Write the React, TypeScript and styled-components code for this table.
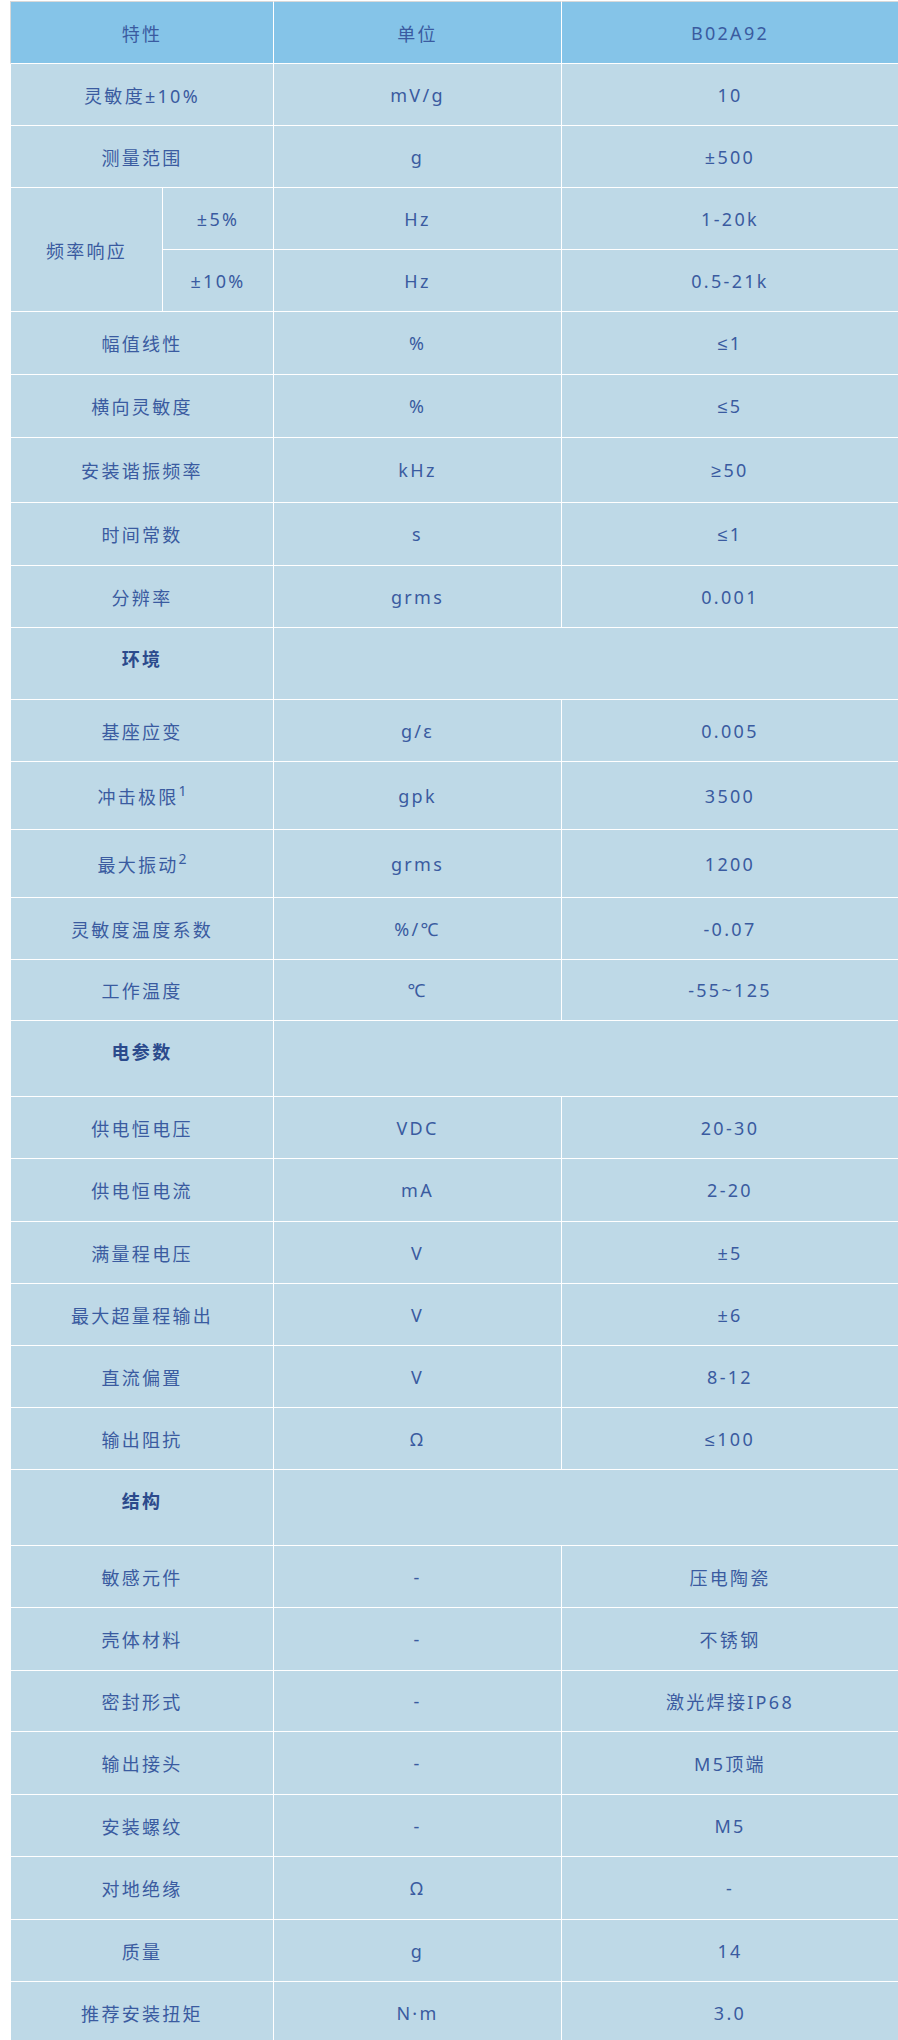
import React from 'react';
import styled, { createGlobalStyle } from 'styled-components';

const GlobalStyle = createGlobalStyle`
  html, body {
    margin: 0;
    padding: 0;
    background: #ffffff;
  }
  body {
    font-family: "Noto Sans", "Liberation Sans", "Noto Sans CJK SC", sans-serif;
  }
`;

const Page = styled.div`
  width: 898px;
  padding: 1px 0 0 10px;
  box-sizing: border-box;
  overflow: hidden;
`;

const Table = styled.table`
  width: 889px;
  table-layout: fixed;
  border-collapse: separate;
  border-spacing: 0;
  font-size: 18px;
  letter-spacing: 2.3px;
  color: #3a5ba0;
`;

const Row = styled.tr<{ $h: number }>`
  height: ${(p) => p.$h}px;
`;

const HeadCell = styled.th<{ $first?: boolean }>`
  padding: 0;
  background: #85c4e8;
  font-weight: 400;
  text-align: center;
  vertical-align: middle;
  border-top: 1px solid #d9d9d9;
  border-right: 1px solid #ffffff;
  border-bottom: 1px solid #ffffff;
  border-left: ${(p) => (p.$first ? '1px solid #d9d9d9' : 'none')};
`;

const Cell = styled.td<{ $first?: boolean }>`
  padding: 0;
  background: #bed9e7;
  text-align: center;
  vertical-align: middle;
  border-right: 1px solid #ffffff;
  border-bottom: 1px solid #ffffff;
  border-left: ${(p) => (p.$first ? '1px solid #ffffff' : 'none')};
  white-space: nowrap;
`;

const SectionCell = styled(Cell)`
  vertical-align: top;
  padding-top: 19px;
  line-height: 24px;
  font-weight: 700;
  color: #2b4a8c;
`;

const Sup = styled.sup`
  font-size: 14px;
  line-height: 0;
  vertical-align: 8px;
  letter-spacing: 0;
  margin-left: 0;
`;

type Spec = { kind: 'spec'; name: React.ReactNode; unit: string; value: string; h: number };
type Section = { kind: 'section'; title: string; h: number };
type Split = {
  kind: 'split';
  name: string;
  subs: { label: string; unit: string; value: string; h: number }[];
};
type Item = Spec | Section | Split;

const rows: Item[] = [
  { kind: 'spec', name: '灵敏度±10%', unit: 'mV/g', value: '10', h: 62 },
  { kind: 'spec', name: '测量范围', unit: 'g', value: '±500', h: 62 },
  {
    kind: 'split',
    name: '频率响应',
    subs: [
      { label: '±5%', unit: 'Hz', value: '1-20k', h: 62 },
      { label: '±10%', unit: 'Hz', value: '0.5-21k', h: 62 },
    ],
  },
  { kind: 'spec', name: '幅值线性', unit: '%', value: '≤1', h: 63 },
  { kind: 'spec', name: '横向灵敏度', unit: '%', value: '≤5', h: 63 },
  { kind: 'spec', name: '安装谐振频率', unit: 'kHz', value: '≥50', h: 65 },
  { kind: 'spec', name: '时间常数', unit: 's', value: '≤1', h: 63 },
  { kind: 'spec', name: '分辨率', unit: 'grms', value: '0.001', h: 62 },
  { kind: 'section', title: '环境', h: 72 },
  { kind: 'spec', name: '基座应变', unit: 'g/ε', value: '0.005', h: 62 },
  {
    kind: 'spec',
    name: (
      <>
        冲击极限<Sup>1</Sup>
      </>
    ),
    unit: 'gpk',
    value: '3500',
    h: 68,
  },
  {
    kind: 'spec',
    name: (
      <>
        最大振动<Sup>2</Sup>
      </>
    ),
    unit: 'grms',
    value: '1200',
    h: 68,
  },
  { kind: 'spec', name: '灵敏度温度系数', unit: '%/℃', value: '-0.07', h: 62 },
  { kind: 'spec', name: '工作温度', unit: '℃', value: '-55~125', h: 61 },
  { kind: 'section', title: '电参数', h: 76 },
  { kind: 'spec', name: '供电恒电压', unit: 'VDC', value: '20-30', h: 62 },
  { kind: 'spec', name: '供电恒电流', unit: 'mA', value: '2-20', h: 63 },
  { kind: 'spec', name: '满量程电压', unit: 'V', value: '±5', h: 62 },
  { kind: 'spec', name: '最大超量程输出', unit: 'V', value: '±6', h: 62 },
  { kind: 'spec', name: '直流偏置', unit: 'V', value: '8-12', h: 62 },
  { kind: 'spec', name: '输出阻抗', unit: 'Ω', value: '≤100', h: 62 },
  { kind: 'section', title: '结构', h: 76 },
  { kind: 'spec', name: '敏感元件', unit: '-', value: '压电陶瓷', h: 62 },
  { kind: 'spec', name: '壳体材料', unit: '-', value: '不锈钢', h: 63 },
  { kind: 'spec', name: '密封形式', unit: '-', value: '激光焊接IP68', h: 61 },
  { kind: 'spec', name: '输出接头', unit: '-', value: 'M5顶端', h: 63 },
  { kind: 'spec', name: '安装螺纹', unit: '-', value: 'M5', h: 62 },
  { kind: 'spec', name: '对地绝缘', unit: 'Ω', value: '-', h: 63 },
  { kind: 'spec', name: '质量', unit: 'g', value: '14', h: 62 },
  { kind: 'spec', name: '推荐安装扭矩', unit: 'N·m', value: '3.0', h: 62 },
];

const renderItem = (item: Item, index: number) => {
  if (item.kind === 'section') {
    return (
      <Row key={index} $h={item.h}>
        <SectionCell $first colSpan={2}>
          {item.title}
        </SectionCell>
        <Cell colSpan={2} />
      </Row>
    );
  }

  if (item.kind === 'split') {
    return item.subs.map((sub, i) => (
      <Row key={`${index}-${i}`} $h={sub.h}>
        {i === 0 && (
          <Cell $first rowSpan={item.subs.length}>
            {item.name}
          </Cell>
        )}
        <Cell>{sub.label}</Cell>
        <Cell>{sub.unit}</Cell>
        <Cell>{sub.value}</Cell>
      </Row>
    ));
  }

  return (
    <Row key={index} $h={item.h}>
      <Cell $first colSpan={2}>
        {item.name}
      </Cell>
      <Cell>{item.unit}</Cell>
      <Cell>{item.value}</Cell>
    </Row>
  );
};

export default function App() {
  return (
    <>
      <GlobalStyle />
      <Page>
        <Table>
          <colgroup>
            <col style={{ width: 153 }} />
            <col style={{ width: 111 }} />
            <col style={{ width: 288 }} />
            <col style={{ width: 337 }} />
          </colgroup>
          <thead>
            <Row $h={63}>
              <HeadCell $first colSpan={2}>
                特性
              </HeadCell>
              <HeadCell>单位</HeadCell>
              <HeadCell>B02A92</HeadCell>
            </Row>
          </thead>
          <tbody>{rows.map(renderItem)}</tbody>
        </Table>
      </Page>
    </>
  );
}
